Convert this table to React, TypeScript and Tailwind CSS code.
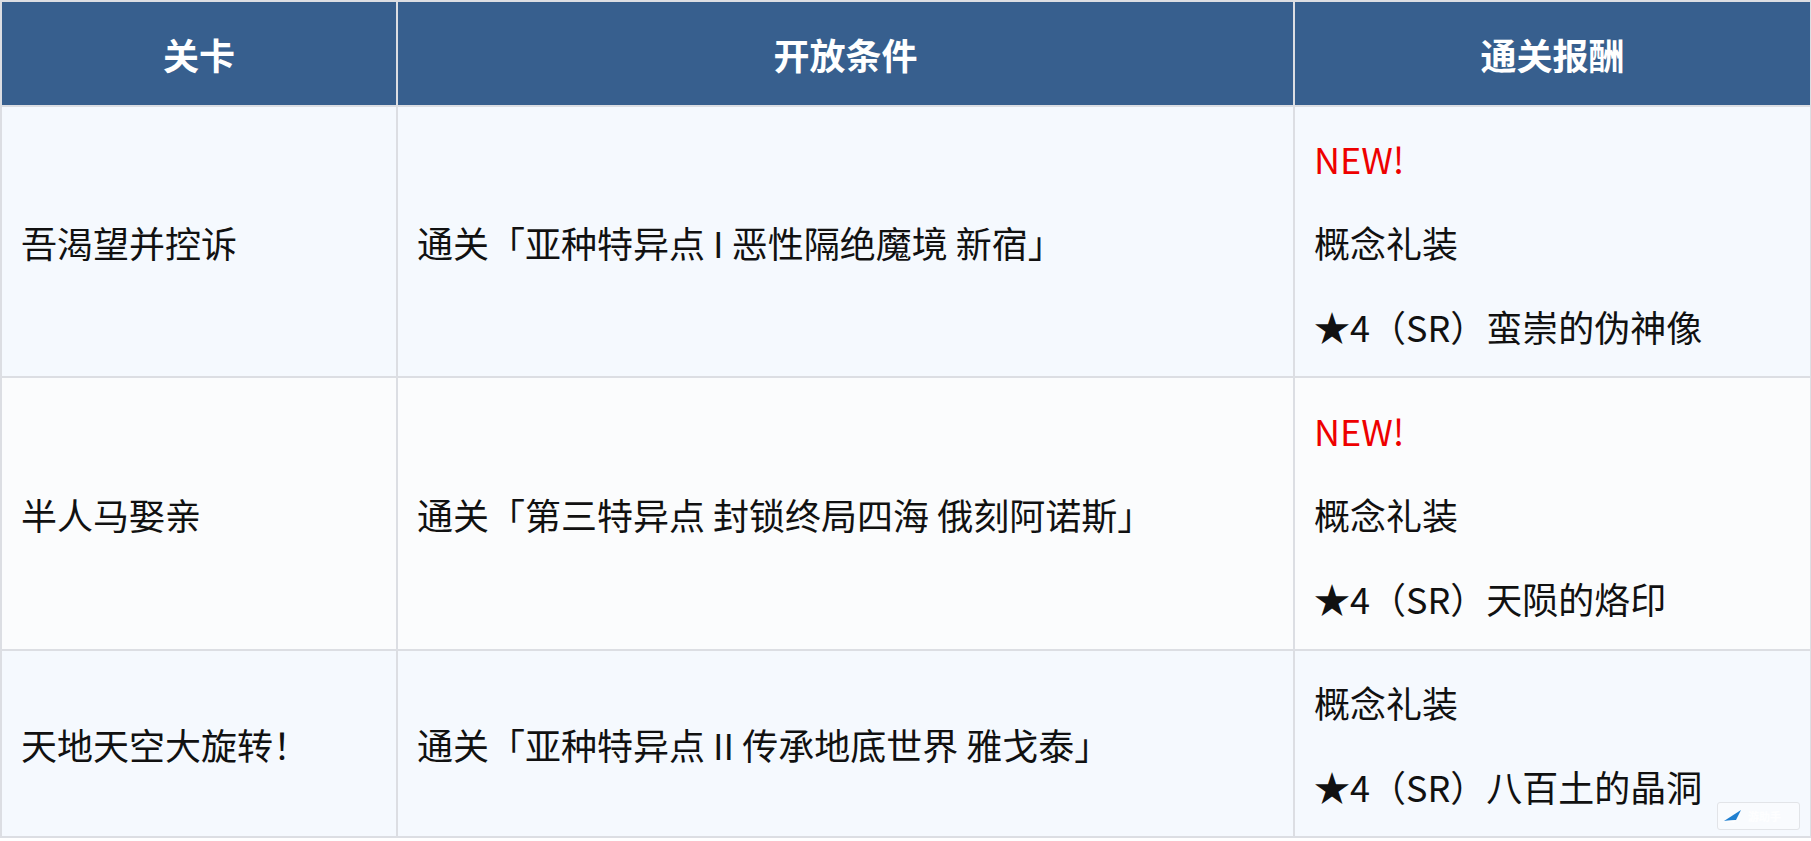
const FONT = "font-['Noto_Sans_CJK_SC','Noto_Sans',sans-serif]";

interface StageRow {
  stage: string;
  condition: string;
  isNew: boolean;
  reward: string;
  bg: string;
  height: string;
}

const ROWS: StageRow[] = [
  {
    stage: "吾渴望并控诉",
    condition: "通关「亚种特异点 I 恶性隔绝魔境 新宿」",
    isNew: true,
    reward: "★4（SR）蛮崇的伪神像",
    bg: "bg-[#f5f9fe]",
    height: "h-[271px]",
  },
  {
    stage: "半人马娶亲",
    condition: "通关「第三特异点 封锁终局四海 俄刻阿诺斯」",
    isNew: true,
    reward: "★4（SR）天陨的烙印",
    bg: "bg-[#fbfcfd]",
    height: "h-[273px]",
  },
  {
    stage: "天地天空大旋转！",
    condition: "通关「亚种特异点 II 传承地底世界 雅戈泰」",
    isNew: false,
    reward: "★4（SR）八百土的晶洞",
    bg: "bg-[#f5f9fe]",
    height: "h-[187px]",
  },
];

const Watermark = () => (
  <div className="absolute right-[11px] bottom-[11px] flex h-[28px] w-[83px] items-center gap-1 rounded-[3px] border border-[#e2e4e8] bg-white/40 px-1">
    <svg width="22" height="16" viewBox="0 0 22 16">
      <path d="M2 13 L19 2 L14 12 Z" fill="#1f7fd0" />
      <path d="M2 13 L14 12 L12 15 Z" fill="#ffffff" opacity="0.8" />
    </svg>
    <span className="text-[11px] leading-none font-bold text-white/80">游助手</span>
  </div>
);

const App = () => {
  return (
    <div className={`relative h-[841px] w-[1811px] bg-white ${FONT}`}>
      <table className="w-[1810px] table-fixed border-collapse border-2 border-[#dcdee3] text-[36px] text-[#111]">
        <colgroup>
          <col className="w-[396px]" />
          <col className="w-[897px]" />
          <col className="w-[517px]" />
        </colgroup>
        <thead>
          <tr className="h-[105px] bg-[#375f8e] text-white">
            <th className="border-2 border-[#dcdee3] font-bold">关卡</th>
            <th className="border-2 border-[#dcdee3] font-bold">开放条件</th>
            <th className="border-2 border-[#dcdee3] font-bold">通关报酬</th>
          </tr>
        </thead>
        <tbody>
          {ROWS.map((row) => (
            <tr key={row.stage} className={`${row.height} ${row.bg}`}>
              <td className="border-2 border-[#dcdee3] pl-[19px] align-middle leading-[54px]">
                {row.stage}
              </td>
              <td className="border-2 border-[#dcdee3] pl-[19px] align-middle leading-[54px]">
                {row.condition}
              </td>
              <td className="border-2 border-[#dcdee3] pl-[19px] align-middle">
                <div className="flex flex-col gap-[30px] leading-[54px]">
                  {row.isNew && <p className="text-[#ee0000]">NEW!</p>}
                  <p>概念礼装</p>
                  <p>{row.reward}</p>
                </div>
              </td>
            </tr>
          ))}
        </tbody>
      </table>
      <Watermark />
    </div>
  );
};

export default App;
